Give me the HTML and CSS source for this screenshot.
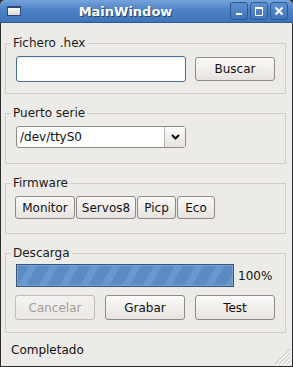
FILE: index.html
```html
<!DOCTYPE html>
<html lang="es">
<head>
  <meta charset="UTF-8">
  <title>MainWindow</title>
  <link rel="stylesheet" href="styles.css">
</head>
<body>
<div class="window">
  <div class="titlebar">
    <span class="app-icon"></span>
    <span class="title">MainWindow</span>
    <div class="wm-buttons">
      <span class="wm-btn">
        <svg width="16" height="16" viewBox="0 0 16 16"><rect x="5" y="10" width="6" height="2" fill="#fff"/></svg>
      </span>
      <span class="wm-btn">
        <svg width="16" height="16" viewBox="0 0 16 16"><path d="M4.5 5.5h7v7h-7z" fill="none" stroke="#fff"/><rect x="4" y="4" width="8" height="2" fill="#fff"/></svg>
      </span>
      <span class="wm-btn">
        <svg width="16" height="16" viewBox="0 0 16 16"><path d="M4.5 4.5l7 7M11.5 4.5l-7 7" stroke="#fff" stroke-width="2"/></svg>
      </span>
    </div>
  </div>

  <div class="client">
    <fieldset class="group group-file">
      <legend>Fichero .hex</legend>
      <div class="row">
        <input type="text" class="hex-input">
        <button class="btn btn-wide">Buscar</button>
      </div>
    </fieldset>

    <fieldset class="group group-port">
      <legend>Puerto serie</legend>
      <div class="combo">
        <span class="combo-text">/dev/ttyS0</span>
        <span class="combo-arrow">
          <svg width="9" height="6" viewBox="0 0 9 6"><path d="M1 1l3.5 3.5L8 1" fill="none" stroke="#000" stroke-width="2"/></svg>
        </span>
      </div>
    </fieldset>

    <fieldset class="group group-firmware">
      <legend>Firmware</legend>
      <div class="fw-row">
        <button class="btn fw-btn w60">Monitor</button>
        <button class="btn fw-btn w60">Servos8</button>
        <button class="btn fw-btn w39">Picp</button>
        <button class="btn fw-btn w38">Eco</button>
      </div>
    </fieldset>

    <fieldset class="group group-download">
      <legend>Descarga</legend>
      <div class="progress-row">
        <div class="progress"><div class="progress-fill" style="width: 100%"></div></div>
        <span class="progress-label">100%</span>
      </div>
      <div class="action-row">
        <button class="btn btn-wide" disabled>Cancelar</button>
        <button class="btn btn-wide">Grabar</button>
        <button class="btn btn-wide">Test</button>
      </div>
    </fieldset>

    <div class="statusbar">
      <span class="status-text">Completado</span>
      <svg class="grip" width="16" height="16" viewBox="0 0 16 16">
        <path d="M15 4L4 15M15 8L8 15M15 12L12 15M15 0L0 15" stroke="#c9c6c1" stroke-width="1"/>
        <path d="M16 5L5 16M16 9L9 16M16 13L13 16M16 1L1 16" stroke="#f8f7f6" stroke-width="1"/>
      </svg>
    </div>
  </div>
</div>
</body>
</html>
```

FILE: styles.css
```css
body {
  margin: 0;
  font-family: "DejaVu Sans", sans-serif;
  font-size: 12px;
  color: #111;
}
.window {
  width: 293px;
  height: 367px;
  display: flex;
  flex-direction: column;
  background: #2d2d2d;
  overflow: hidden;
}
.titlebar {
  height: 23px;
  box-sizing: border-box;
  display: flex;
  align-items: center;
  background: linear-gradient(#76a3dc, #4d82c6 45%, #3f74ba);
  border-radius: 5px 5px 0 0;
  border-bottom: 1px solid #2f5891;
}
.app-icon {
  width: 14px;
  height: 10px;
  margin-left: 7px;
  box-sizing: border-box;
  border: 1px solid #2c4a72;
  border-top-width: 2px;
  background: linear-gradient(#fafafa, #d8d8d8);
}
.title {
  flex: 1;
  text-align: center;
  color: #fff;
  font-weight: bold;
  font-size: 13px;
  text-shadow: 1px 1px 0 #23466f;
}
.wm-buttons {
  display: flex;
  gap: 2px;
  margin-right: 5px;
}
.wm-btn {
  width: 18px;
  height: 18px;
  box-sizing: border-box;
  border: 1px solid #2e5a92;
  border-radius: 3px;
  background: linear-gradient(#5f90d0, #3f74ba);
  display: flex;
  align-items: center;
  justify-content: center;
}
.client {
  flex: 1;
  display: flex;
  flex-direction: column;
  background: #edebe7;
  margin: 0 1px 1px 1px;
  padding-top: 13px;
}
.group {
  margin: 0 6px 12px 4px;
  border: 1px solid #d1cec9;
  padding: 6px 9px 11px 9px;
}
.group legend {
  padding: 0 2px;
  margin-left: -4px;
  line-height: 14px;
  color: #1a1a1a;
}
.group-port { padding-bottom: 15px; }
.group-firmware { padding-bottom: 14px; }
.group-download { padding-top: 4px; padding-bottom: 12px; margin-bottom: 0; }

.row {
  display: flex;
  align-items: center;
  gap: 9px;
}
.hex-input {
  width: 170px;
  height: 26px;
  margin: 0 0 0 1px;
  box-sizing: border-box;
  border: 1px solid #4c6f97;
  border-radius: 3px;
  background: #fff;
  box-shadow: inset 0 1px 1px rgba(0, 0, 0, 0.08);
  outline: none;
}
.btn {
  font-family: "DejaVu Sans", sans-serif;
  font-size: 12px;
  color: #111;
  height: 24px;
  padding: 0;
  box-sizing: border-box;
  border: 1px solid #8e8b86;
  border-radius: 3px;
  background: linear-gradient(#fbfaf9, #e6e3df);
}
.btn:disabled {
  color: #9f9c98;
  border-color: #c0bdb8;
  background: linear-gradient(#f3f2f0, #ebe9e6);
}
.btn-wide { width: 80px; }

.combo {
  width: 170px;
  height: 22px;
  margin-left: 1px;
  box-sizing: border-box;
  border: 1px solid #8e8b86;
  border-radius: 3px;
  background: #fff;
  display: flex;
  align-items: center;
}
.combo-text {
  flex: 1;
  padding-left: 3px;
}
.combo-arrow {
  width: 21px;
  height: 100%;
  box-sizing: border-box;
  border-left: 1px solid #b9b6b1;
  background: linear-gradient(#fbfaf9, #e6e3df);
  display: flex;
  align-items: center;
  justify-content: center;
}

.fw-row {
  display: flex;
  gap: 1px;
}
.fw-btn { height: 23px; }
.w60 { width: 60px; }
.w39 { width: 39px; }
.w38 { width: 38px; }

.progress-row {
  display: flex;
  align-items: center;
  gap: 4px;
}
.progress {
  width: 218px;
  height: 23px;
  margin-left: 1px;
  box-sizing: border-box;
  border: 1px solid #3a5575;
  background: #fff;
}
.progress-fill {
  height: 100%;
  box-shadow: inset 0 0 0 1px #7aa3d3;
  background: repeating-linear-gradient(120deg, #5a8bc3 0, #5a8bc3 11px, #6898cf 11px, #6898cf 18px);
}
.progress-label {
  color: #111;
}
.action-row {
  display: flex;
  gap: 10px;
  margin-top: 8px;
}
.action-row .btn { height: 25px; }

.statusbar {
  flex: 1;
  display: flex;
  align-items: center;
  justify-content: space-between;
  padding-left: 10px;
  position: relative;
}
.grip {
  position: absolute;
  right: 1px;
  bottom: 1px;
}
```
